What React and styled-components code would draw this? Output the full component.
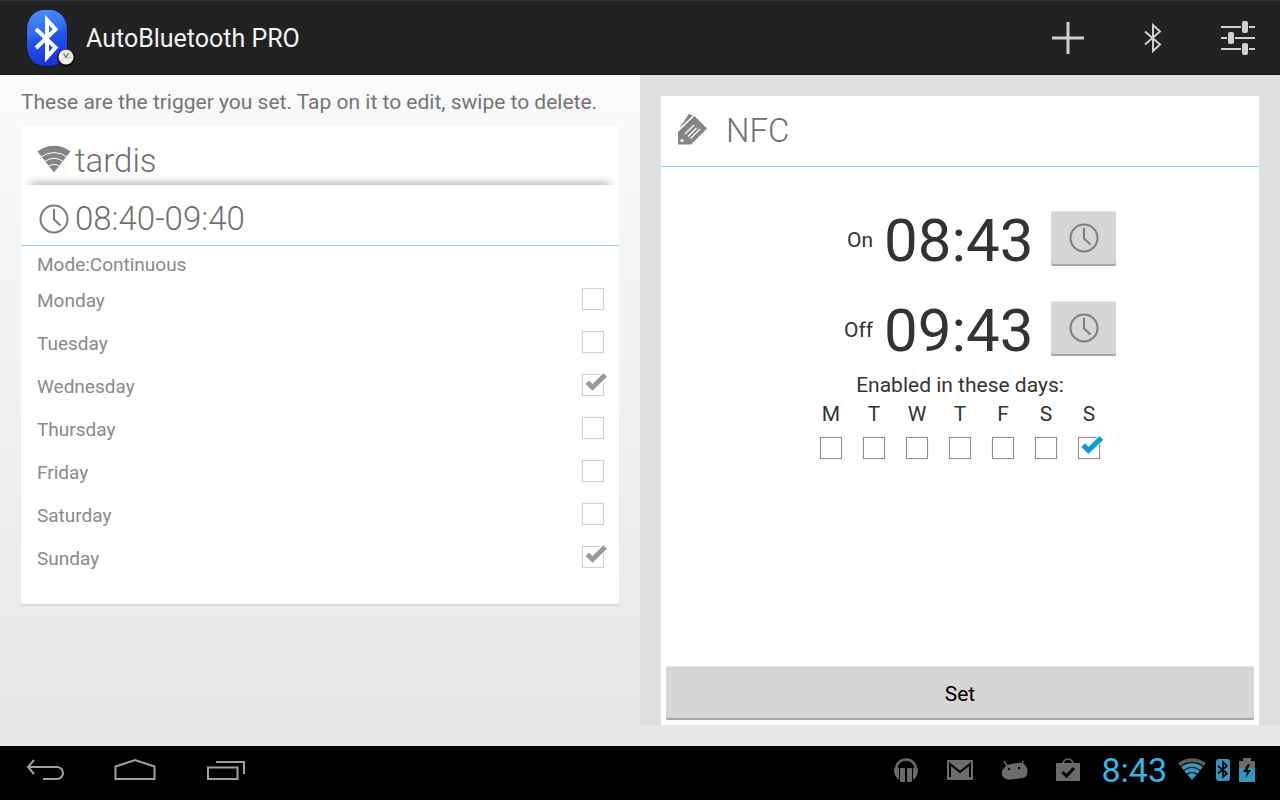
import React from "react";
import styled, { createGlobalStyle } from "styled-components";

const WEEK = [
  { name: "Monday", short: "M" },
  { name: "Tuesday", short: "T" },
  { name: "Wednesday", short: "W", trigger: true },
  { name: "Thursday", short: "T" },
  { name: "Friday", short: "F" },
  { name: "Saturday", short: "S" },
  { name: "Sunday", short: "S", trigger: true, nfc: true },
];

export default function App() {
  return (
    <Page>
      <GlobalStyle />

      {/* action bar */}
      <ActionBar>
        <Brand>
          <LogoIcon />
          <AppTitle>AutoBluetooth PRO</AppTitle>
        </Brand>
        <BarButton aria-label="Add trigger">
          <PlusIcon />
        </BarButton>
        <BarButton aria-label="Bluetooth">
          <BluetoothIcon />
        </BarButton>
        <BarButton aria-label="Settings">
          <SlidersIcon />
        </BarButton>
      </ActionBar>

      <Main>
        {/* trigger list */}
        <TriggerPane>
          <Hint>These are the trigger you set. Tap on it to edit, swipe to delete.</Hint>
          <TriggerCard>
            <WifiTrigger>
              <WifiIcon />
              tardis
            </WifiTrigger>
            <TimeTrigger>
              <ClockIcon />
              08:40-09:40
            </TimeTrigger>
            <Mode>Mode:Continuous</Mode>
            {WEEK.map((day) => (
              <DayRow key={day.name}>
                {day.name}
                <Checkbox muted defaultChecked={day.trigger} disabled />
              </DayRow>
            ))}
          </TriggerCard>
        </TriggerPane>

        {/* trigger editor */}
        <EditorPane>
          <EditorCard>
            <EditorHeader>
              <TagIcon />
              <EditorTitle>NFC</EditorTitle>
            </EditorHeader>
            <EditorBody>
              <TimeRow label="On" time="08:43" />
              <TimeRow label="Off" time="09:43" />
              <DaysCaption>Enabled in these days:</DaysCaption>
              <Days>
                {WEEK.map((day) => (
                  <DayColumn key={day.name}>
                    {day.short}
                    <Checkbox defaultChecked={day.nfc} />
                  </DayColumn>
                ))}
              </Days>
            </EditorBody>
            <SetButton>Set</SetButton>
          </EditorCard>
        </EditorPane>
      </Main>

      {/* system bar */}
      <SystemBar>
        <NavButtons>
          <NavButton aria-label="Back">
            <BackIcon />
          </NavButton>
          <NavButton aria-label="Home">
            <HomeIcon />
          </NavButton>
          <NavButton aria-label="Recent apps">
            <RecentsIcon />
          </NavButton>
        </NavButtons>
        <Notifications>
          <HeadphonesIcon />
          <MailIcon />
          <DroidIcon />
          <BagIcon />
        </Notifications>
        <Clock>8:43</Clock>
        <Status>
          <StatusWifiIcon />
          <StatusBluetoothIcon />
          <BatteryIcon />
        </Status>
      </SystemBar>
    </Page>
  );
}

function TimeRow({ label, time }) {
  return (
    <TimeLine>
      <TimeLabel>{label}</TimeLabel>
      <TimeValue>{time}</TimeValue>
      <PickButton aria-label={`Pick ${label} time`}>
        <ClockIcon />
      </PickButton>
    </TimeLine>
  );
}

function Checkbox({ muted, ...props }) {
  return (
    <CheckWrapper>
      <CheckInput type="checkbox" $muted={muted} {...props} />
      <CheckMark viewBox="0 0 28 24" $muted={muted}>
        <path d="M3.500 12L7 8.500 10.500 12 21.500 1.200 25 4.800 10.500 18.800z" />
      </CheckMark>
    </CheckWrapper>
  );
}

/* icons */
const LogoIcon = () => (
  <svg width="54" height="64" viewBox="1 0 54 64" aria-hidden="true">
    <defs>
      <linearGradient id="logo" x1="0" y1="0" x2="0.2" y2="1">
        <stop offset="0" stopColor="#4a94ff" />
        <stop offset="0.45" stopColor="#2f6cf6" />
        <stop offset="0.55" stopColor="#2156f0" />
        <stop offset="1" stopColor="#1a34dc" />
      </linearGradient>
    </defs>
    <rect x="5" y="5" width="42" height="56" rx="19" fill="#151515" />
    <rect x="6" y="4" width="40" height="56" rx="17" ry="19" fill="url(#logo)" />
    <path
      d="M15 23l19.500 18.500L26 51V14l8.500 9.500L15 42"
      fill="none"
      stroke="#fff"
      strokeWidth="4"
    />
    <circle cx="45" cy="52" r="9" fill="#111" />
    <circle cx="45" cy="51" r="7.500" fill="#eee" />
    <path d="M42.500 47.500l2.500 4 2.500-4.500" fill="none" stroke="#666" strokeWidth="1.200" />
    <path d="M45 51.500h6" stroke="#f3a6a0" />
  </svg>
);

const PlusIcon = () => (
  <svg width="32" height="32" viewBox="0 0 32 32" stroke="#d0d0d0" strokeWidth="3">
    <path d="M16 0v32M0 16h32" />
  </svg>
);

const BluetoothIcon = () => (
  <svg width="20" height="32" viewBox="0 0 20 32" fill="none" stroke="#d0d0d0" strokeWidth="2">
    <path d="M2 9.500l15 13-7 6.500V3l7 6.500L2 22.500" />
  </svg>
);

const SlidersIcon = () => (
  <svg width="34" height="34" viewBox="0 0 34 34" fill="#d0d0d0">
    <path d="M0 5h20v2H0zM28 5h6v2h-6zM0 16h6v2H0zM14 16h20v2H14zM0 27h20v2H0zM28 27h6v2h-6z" />
    <rect x="21" y="0" width="6" height="12" rx="2" />
    <rect x="7" y="11" width="6" height="12" rx="2" />
    <rect x="21" y="22" width="6" height="12" rx="2" />
  </svg>
);

const WifiIcon = () => (
  <svg width="34" height="28" viewBox="0 1 34 28">
    <path d="M.5 6.500A27 27 0 0 1 33.500 6.500L17 27.500z" fill="#858585" />
    <g fill="none" stroke="#fff" strokeWidth="1">
      <path d="M3 12.500Q17 2.500 31 12.500M7 17Q17 9.500 27 17M11 21.500Q17 17.500 23 21.500" />
    </g>
  </svg>
);

const ClockIcon = () => (
  <svg width="30" height="30" viewBox="0 0 30 30" fill="none" stroke="#7d7d7d" strokeWidth="2">
    <circle cx="15" cy="15" r="13.500" />
    <path d="M15 5v10.500l6.500 6" />
  </svg>
);

const TagIcon = () => (
  <svg width="32" height="32" viewBox="0 1 32 32">
    <path d="M2 15.500L12 1l4 1.500z" fill="#858585" />
    <path d="M1 19L17.500 3l12.500 12.500L14 31.500H1z" fill="#858585" />
    <circle cx="5" cy="27.500" r="1.600" fill="#fff" />
    <path
      d="M8 21l9-9M11 23.500l8.500-8.500M13.500 25.500l9.500-9.500"
      stroke="#fff"
      strokeWidth="1.300"
    />
  </svg>
);

const BackIcon = () => (
  <svg width="40" height="24" viewBox="0 0 40 24" fill="none" stroke="#a0a0a0" strokeWidth="2">
    <path d="M9 2L3 9l6 7M3 9h29a5.500 5.500 0 0 1 0 12H18" />
  </svg>
);

const HomeIcon = () => (
  <svg width="42" height="24" viewBox="0 0 42 24" fill="none" stroke="#a0a0a0" strokeWidth="2">
    <path d="M1.500 21V8.500L21 2l19.500 6.500V21z" />
  </svg>
);

const RecentsIcon = () => (
  <svg width="40" height="24" viewBox="0 0 40 24" fill="none" stroke="#a0a0a0" strokeWidth="2">
    <path d="M3 9.500h29.500V21H3zM11 4h28v12" />
  </svg>
);

const HeadphonesIcon = () => (
  <svg width="26" height="26" viewBox="0 0 26 26" fill="#6b6b6b">
    <path d="M3 12a10 9.500 0 0 1 20 0" fill="none" stroke="#6b6b6b" strokeWidth="2.500" />
    <path d="M1 13q0-3 3-3l2 1v12q-5-4-5-10zM25 13q0-3-3-3l-2 1v12q5-4 5-10z" />
    <rect x="7" y="11" width="5" height="14" rx="1" />
    <rect x="14" y="11" width="5" height="14" rx="1" />
  </svg>
);

const MailIcon = () => (
  <svg width="26" height="20" viewBox="0 0 26 20">
    <path d="M0 0h26v20H0z" fill="#6b6b6b" />
    <path d="M3 17V4l10 8 10-8v13" fill="none" stroke="#000" strokeWidth="2" />
  </svg>
);

const DroidIcon = () => (
  <svg width="27" height="22" viewBox="0 0 27 22">
    <path d="M3 2l3 5M22 2l-1 5" stroke="#6b6b6b" strokeWidth="1.500" />
    <path
      d="M1 12q3-6 9-7 5-1 7-1 6-1 9 5 2 8-4 10-6 1-9 1-6 2-10-1-3-3-2-7z"
      fill="#6b6b6b"
    />
    <circle cx="8" cy="10" r="1.200" />
    <circle cx="18" cy="9" r="1.200" />
  </svg>
);

const BagIcon = () => (
  <svg width="24" height="24" viewBox="0 0 24 24" fill="none">
    <path d="M7 6a5 5 0 0 1 10 0" stroke="#6b6b6b" strokeWidth="1.500" />
    <path d="M0 5h24v18H0z" fill="#6b6b6b" />
    <path d="M6.500 14l4 4L18 10" stroke="#000" strokeWidth="3" />
  </svg>
);

const StatusWifiIcon = () => (
  <svg width="30" height="24" viewBox="0 1 30 24">
    <path d="M1 6A23 23 0 0 1 29 6L15 23z" fill="#5c5c5c" />
    <path d="M4.200 10A17.500 17.500 0 0 1 25.800 10L15 23z" fill="#3795bb" />
    <g fill="none" stroke="#000" strokeWidth="1.200">
      <circle cx="15" cy="23" r="17.500" />
      <circle cx="15" cy="23" r="12.500" />
      <circle cx="15" cy="23" r="7.500" />
    </g>
  </svg>
);

const StatusBluetoothIcon = () => (
  <svg width="14" height="22" viewBox="0 0 14 22">
    <rect width="14" height="22" rx="3" fill="#3795bb" />
    <path d="M2 7l9 7.500L7 18V3l4 4-9 7.500" fill="none" stroke="#000" strokeWidth="1.700" />
  </svg>
);

const BatteryIcon = () => (
  <svg width="16" height="24" viewBox="0 0 16 24">
    <path d="M4 0h8v3h4v8H0V3h4z" fill="#6b6b6b" />
    <path d="M0 10h16v14H0z" fill="#3795bb" />
    <path d="M9 6l-5 8h4l-1.500 6L12 12H8.500L11 6z" />
  </svg>
);

const GlobalStyle = createGlobalStyle`
  * {
    box-sizing: border-box;
  }

  body {
    margin: 0;
    font-family: Roboto, sans-serif;
  }

  button {
    border: 0;
    padding: 0;
    background: none;
    font-family: inherit;
    cursor: pointer;
  }

  svg {
    display: block;
    flex: none;
    overflow: visible;
  }
`;

const Page = styled("div")`
  min-height: 100vh;
  display: flex;
  flex-direction: column;
  background: linear-gradient(#fafafa 10%, #e7e7e7 90%);
`;

const ActionBar = styled("header")`
  height: 75px;
  display: flex;
  align-items: center;
  background: #222;
  box-shadow: inset 0 1px 0 #333, inset 0 -2px 0 #1b1b1b;
`;

const Brand = styled("div")`
  flex: 1;
  display: flex;
  align-items: center;
  gap: 10px;
  padding-left: 22px;
`;

const AppTitle = styled("h1")`
  margin: 0;
  padding-top: 2px;
  color: #f3f3f3;
  font-size: 25px;
  font-weight: 400;
`;

const BarButton = styled("button")`
  width: 85px;
  height: 75px;
  display: grid;
  place-items: center;
`;

const Main = styled("main")`
  flex: 1;
  display: flex;
  padding-bottom: 21px;
`;

const Pane = styled("section")`
  flex: 1;
  min-width: 0;
  padding: 0 21px;
`;

const TriggerPane = styled(Pane)``;

const EditorPane = styled(Pane)`
  display: flex;
  padding-top: 21px;
  background: #dfdfdf;
`;

const Hint = styled("p")`
  margin: 0;
  padding-top: 13px;
  min-height: 51px;
  color: #757575;
  font-size: 21px;
  line-height: 28px;
`;

const TriggerCard = styled("article")`
  padding-bottom: 25px;
  background: #fff;
  border-radius: 2px;
  box-shadow: 0 2px 0 #d8d8d8;
  color: #8a8a8a;
  font-size: 19px;
`;

const Trigger = styled("button")`
  width: 100%;
  display: flex;
  align-items: center;
  color: #707070;
  font-size: 33px;
  font-weight: 300;
`;

const WifiTrigger = styled(Trigger)`
  position: relative;
  overflow: hidden;
  height: 59px;
  gap: 4px;
  padding: 9px 16px 0;

  /* shadow cast by the row below */
  &::after {
    content: "";
    position: absolute;
    left: 10px;
    right: 10px;
    bottom: -6px;
    height: 6px;
    box-shadow: 0 0 10px 1px #999;
  }
`;

const TimeTrigger = styled(Trigger)`
  height: 61px;
  gap: 6px;
  padding: 7px 18px 0;
  border-bottom: 1px solid #8fd3ea;
`;

const Mode = styled("p")`
  margin: 0;
  padding: 0 16px;
  line-height: 38px;
  height: 32px;
`;

const DayRow = styled("label")`
  height: 43px;
  display: flex;
  align-items: center;
  justify-content: space-between;
  padding: 2px 15px 0 16px;
`;

const CheckWrapper = styled("span")`
  position: relative;
  display: block;
  width: 22px;
  height: 26px;
`;

const CheckInput = styled("input")`
  appearance: none;
  display: block;
  width: 22px;
  height: 22px;
  margin: 0;
  background: #fff;
  border: 1px solid ${({ $muted }) => ($muted ? "#d2d2d2" : "#8e8e8e")};
  box-shadow: 0 0 1px ${({ $muted }) => ($muted ? "#ddd" : "#bbb")};
`;

const CheckMark = styled("svg")`
  position: absolute;
  left: 0;
  top: -2px;
  width: 28px;
  height: 24px;
  pointer-events: none;
  visibility: hidden;
  fill: ${({ $muted }) => ($muted ? "#9a9a9a" : "#0f9bd0")};
  stroke: ${({ $muted }) => ($muted ? "#fff" : "#d5f0fa")};
  stroke-width: 2px;
  paint-order: stroke;

  ${CheckInput}:checked + & {
    visibility: visible;
  }
`;

const EditorCard = styled("article")`
  flex: 1;
  display: flex;
  flex-direction: column;
  background: #fff;
  color: #333;
`;

const EditorHeader = styled("div")`
  height: 71px;
  display: flex;
  align-items: center;
  gap: 17px;
  padding: 0 16px 2px;
  border-bottom: 1px solid #8fd3ea;
`;

const EditorTitle = styled("h2")`
  margin: 0;
  color: #707070;
  font-size: 33px;
  font-weight: 300;
`;

const EditorBody = styled("div")`
  flex: 1;
  display: flex;
  flex-direction: column;
  align-items: center;
  padding-top: 26px;
  font-size: 21px;
`;

const TimeLine = styled("div")`
  height: 90px;
  display: grid;
  grid-template-columns: 74px 156px 70px;
  column-gap: 11px;
  align-items: center;
`;

const TimeLabel = styled("span")`
  padding-top: 4px;
  text-align: right;
`;

const TimeValue = styled("output")`
  padding-top: 4px;
  font-size: 60px;
`;

const Raised = styled("button")`
  background: #d6d6d6;
  border-radius: 2px;
  box-shadow: inset 0 1px 0 #e6e6e6, inset 0 -2px 0 #a6a6a6;
`;

const PickButton = styled(Raised)`
  width: 65px;
  height: 55px;
  display: grid;
  place-items: center;
`;

const DaysCaption = styled("p")`
  margin: 0;
  line-height: 24px;
`;

const Days = styled("div")`
  display: flex;
  padding-top: 2px;
`;

const DayColumn = styled("label")`
  width: 43px;
  display: flex;
  flex-direction: column;
  align-items: center;
  gap: 8px;
  line-height: 30px;
`;

const SetButton = styled(Raised)`
  height: 54px;
  margin: 5px;
  padding-top: 2px;
  color: #000;
  font-size: 21px;
`;

const SystemBar = styled("footer")`
  height: 54px;
  display: flex;
  align-items: center;
  padding: 0 25px 6px 0;
  background: #000;
`;

const NavButtons = styled("nav")`
  flex: 1;
  display: flex;
`;

const NavButton = styled("button")`
  width: 90px;
  height: 48px;
  display: grid;
  place-items: center;
`;

const Notifications = styled("div")`
  display: flex;
  align-items: center;
  gap: 28px;
  margin-right: 21px;
`;

const Clock = styled("time")`
  margin-right: 10px;
  color: #33b5e5;
  font-size: 34px;
`;

const Status = styled("div")`
  display: flex;
  align-items: center;
  gap: 9px;
`;
